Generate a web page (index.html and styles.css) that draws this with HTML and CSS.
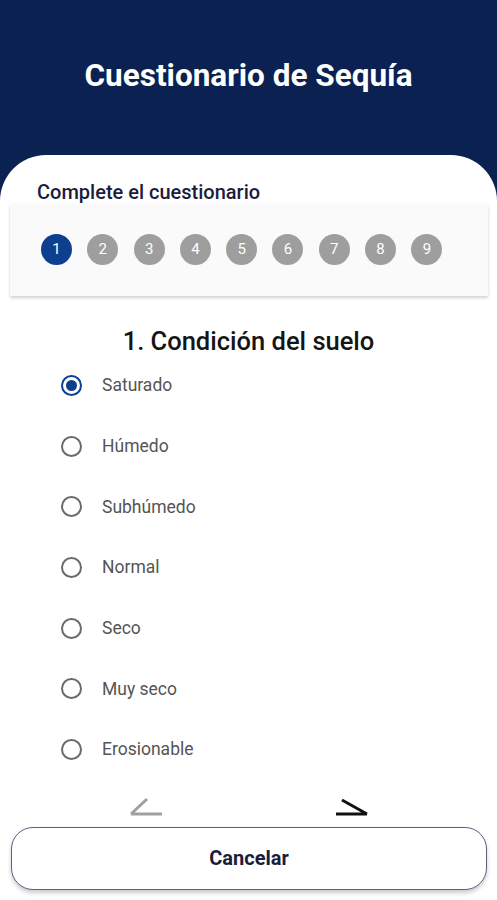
FILE: index.html
```html
<!DOCTYPE html>
<html lang="es">
<head>
  <meta charset="UTF-8">
  <meta name="viewport" content="width=device-width, initial-scale=1">
  <title>Cuestionario de Sequía</title>
  <link rel="stylesheet" href="styles.css">
</head>
<body>
  <header class="app-header">
    <h1>Cuestionario de Sequía</h1>
  </header>

  <main class="sheet">
    <h2 class="sheet-title">Complete el cuestionario</h2>

    <div class="stepper">
      <span class="step active">1</span>
      <span class="step">2</span>
      <span class="step">3</span>
      <span class="step">4</span>
      <span class="step">5</span>
      <span class="step">6</span>
      <span class="step">7</span>
      <span class="step">8</span>
      <span class="step">9</span>
    </div>

    <h3 class="question">1. Condición del suelo</h3>

    <ul class="options">
      <li class="option"><span class="radio checked"></span>Saturado</li>
      <li class="option"><span class="radio"></span>Húmedo</li>
      <li class="option"><span class="radio"></span>Subhúmedo</li>
      <li class="option"><span class="radio"></span>Normal</li>
      <li class="option"><span class="radio"></span>Seco</li>
      <li class="option"><span class="radio"></span>Muy seco</li>
      <li class="option"><span class="radio"></span>Erosionable</li>
    </ul>

    <div class="nav-arrows">
      <svg class="arrow prev" width="36" height="20" viewBox="0 0 36 20">
        <path d="M19 2 L3 17 M3 17 H34" fill="none" stroke="currentColor" stroke-width="3"/>
      </svg>
      <svg class="arrow next" width="36" height="20" viewBox="0 0 36 20">
        <path d="M2 17 H33 M33 17 L8 3" fill="none" stroke="currentColor" stroke-width="3"/>
      </svg>
    </div>

    <button class="cancel-btn" type="button">Cancelar</button>
  </main>
</body>
</html>
```

FILE: styles.css
```css
:root {
  --navy: #0b2152;
  --blue: #0d3f8f;
  --gray-step: #9e9e9e;
  --text-dark: #1c1c3c;
  --text-option: #555555;
}

* {
  box-sizing: border-box;
}

body {
  margin: 0;
  min-height: 900px;
  background-color: var(--navy);
  font-family: Roboto, "Noto Sans", Arial, sans-serif;
  display: flex;
  flex-direction: column;
}

.app-header {
  height: 155px;
  display: flex;
  align-items: center;
  justify-content: center;
  padding-bottom: 4px;
}

.app-header h1 {
  margin: 0;
  color: #ffffff;
  font-size: 31.5px;
  font-weight: 700;
}

.sheet {
  flex: 1;
  background-color: #ffffff;
  border-radius: 46px 46px 0 0;
  padding: 25px 0 0;
  display: flex;
  flex-direction: column;
}

.sheet-title {
  margin: 0 0 0 37px;
  font-size: 20px;
  line-height: 24px;
  font-weight: 500;
  color: var(--text-dark);
}

.stepper {
  margin: 0 9px 0 10px;
  height: 92px;
  background-color: #fafafa;
  box-shadow: 0 2px 3px rgba(0, 0, 0, 0.18);
  display: flex;
  align-items: center;
  gap: 15.3px;
  padding: 0 0 2px 31px;
}

.step {
  width: 31px;
  height: 31px;
  border-radius: 50%;
  background-color: var(--gray-step);
  color: #ffffff;
  font-size: 15px;
  display: flex;
  align-items: center;
  justify-content: center;
}

.step.active {
  background-color: var(--blue);
}

.question {
  margin: 31px 0 0;
  text-align: center;
  font-size: 25.5px;
  line-height: 28px;
  font-weight: 500;
  color: #151515;
}

.options {
  list-style: none;
  margin: 0;
  padding: 0 0 0 61px;
}

.option {
  height: 60.7px;
  display: flex;
  align-items: center;
  gap: 20px;
  font-size: 17.5px;
  color: var(--text-option);
}

.radio {
  width: 21px;
  height: 21px;
  border: 2px solid #6a6a6a;
  border-radius: 50%;
  display: flex;
  align-items: center;
  justify-content: center;
}

.radio.checked {
  border-color: var(--blue);
}

.radio.checked::after {
  content: "";
  width: 11px;
  height: 11px;
  border-radius: 50%;
  background-color: var(--blue);
}

.nav-arrows {
  display: flex;
  justify-content: space-between;
  padding: 0 127px 0 128px;
  margin-top: 17px;
}

.arrow.prev {
  color: #a0a0a0;
}

.arrow.next {
  color: #111111;
}

.cancel-btn {
  margin: 10px 10px 0 11px;
  height: 63px;
  background-color: #ffffff;
  border: 1px solid #5d6180;
  border-radius: 22px;
  box-shadow: 0 3px 4px rgba(0, 0, 0, 0.2);
  font-family: inherit;
  font-size: 20px;
  font-weight: 700;
  color: var(--text-dark);
}
```
